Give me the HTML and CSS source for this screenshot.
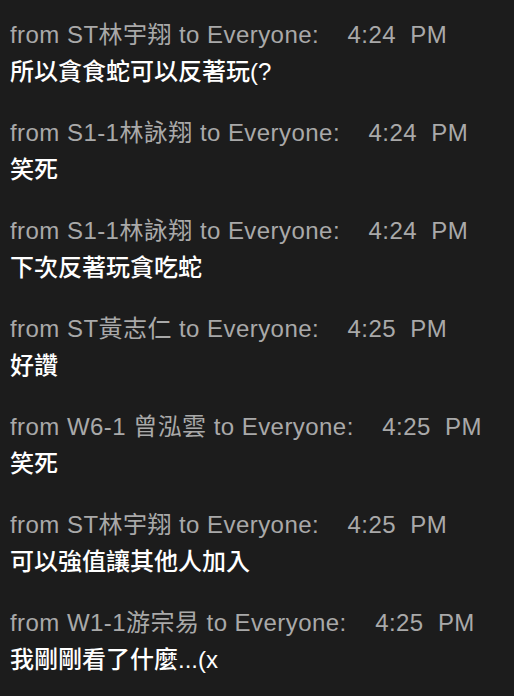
FILE: index.html
```html
<!DOCTYPE html>
<html lang="zh-Hant">
<head>
<meta charset="utf-8">
<link rel="stylesheet" href="styles.css">
</head>
<body>
<div class="chat">
  <div class="msg"><div class="head">from ST林宇翔 to Everyone:    4:24  PM</div><div class="text">所以貪食蛇可以反著玩(?</div></div>
  <div class="msg"><div class="head">from S1-1林詠翔 to Everyone:    4:24  PM</div><div class="text">笑死</div></div>
  <div class="msg"><div class="head">from S1-1林詠翔 to Everyone:    4:24  PM</div><div class="text">下次反著玩貪吃蛇</div></div>
  <div class="msg"><div class="head">from ST黃志仁 to Everyone:    4:25  PM</div><div class="text">好讚</div></div>
  <div class="msg"><div class="head">from W6-1 曾泓雲 to Everyone:    4:25  PM</div><div class="text">笑死</div></div>
  <div class="msg"><div class="head">from ST林宇翔 to Everyone:    4:25  PM</div><div class="text">可以強值讓其他人加入</div></div>
  <div class="msg"><div class="head">from W1-1游宗易 to Everyone:    4:25  PM</div><div class="text">我剛剛看了什麼...(x</div></div>
</div>
</body>
</html>
```
FILE: styles.css
```css
html, body {
  margin: 0;
  padding: 0;
  background: #1c1c1c;
}
.chat {
  padding: 20px 0 0 10px;
  font-family: "Liberation Sans", "Noto Sans CJK TC", sans-serif;
}
.msg {
  margin-bottom: 31px;
}
.head {
  color: #a9a9a9;
  font-size: 24px;
  line-height: 30px;
  letter-spacing: 0.45px;
  white-space: pre;
}
.text {
  color: #ffffff;
  font-size: 24px;
  line-height: 30px;
  margin-top: 7px;
  font-weight: 500;
  white-space: pre;
}
```
